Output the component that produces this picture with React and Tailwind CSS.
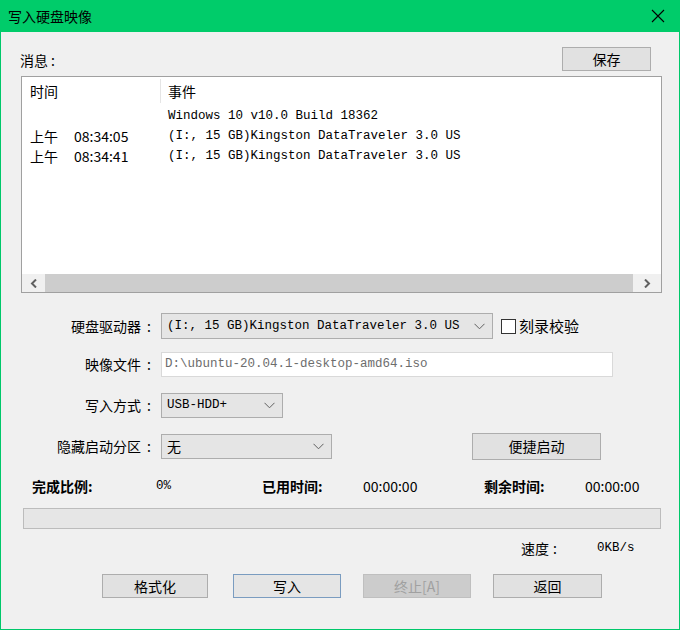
import React from "react";

const cjk = "font-['Microsoft_YaHei','Noto_Sans_CJK_SC',sans-serif]";
const mono = "font-['Liberation_Mono','Noto_Sans_CJK_SC',monospace]";

const Chevron = () => (
  <svg width="11" height="7" viewBox="0 0 11 7" fill="none">
    <path d="M0.5 0.8 L5.5 5.8 L10.5 0.8" stroke="#606060" strokeWidth="1" />
  </svg>
);

const Combo = ({ width, children, textClass }) => (
  <div
    className={`flex h-[24px] items-center justify-between border border-[#adadad] bg-[#e5e5e5] pl-[5px] pr-[7px] ${width}`}
  >
    <span className={textClass}>{children}</span>
    <Chevron />
  </div>
);

const Button = ({ children, className = "" }) => (
  <div
    className={`flex h-[24px] items-center justify-center border text-[14px] ${className}`}
  >
    {children}
  </div>
);

// label with the spaced colon seen in the dialog
const Label = ({ children }) => (
  <span className="flex w-[132px] justify-end pr-[2px]">
    {children}
    <span className="ml-[6px]">:</span>
  </span>
);

const rows = [
  { time: "", event: "Windows 10 v10.0 Build 18362" },
  { time: "08:34:05", event: "(I:, 15 GB)Kingston DataTraveler 3.0 US" },
  { time: "08:34:41", event: "(I:, 15 GB)Kingston DataTraveler 3.0 US" },
];

export default function App() {
  return (
    <div
      className={`flex h-[630px] w-[680px] flex-col border-x border-b border-[#00c86a] bg-[#f0f0f0] text-black ${cjk}`}
    >
      {/* Title bar */}
      <div className="-mx-px flex h-[32px] items-center justify-between bg-[#00cc6a] pl-[8px] pr-[15px]">
        <span className="text-[14px]">写入硬盘映像</span>
        <svg width="14" height="14" viewBox="0 0 14 14">
          <path d="M1 1 L13 13 M13 1 L1 13" stroke="#000" strokeWidth="1.1" />
        </svg>
      </div>

      <div className="flex flex-col pl-[20px] pr-[17px]">
        {/* Messages header */}
        <div className="mt-[15px] flex h-[24px] items-center justify-between">
          <span className="-ml-px pt-[3px] text-[14px]">
            消息<span className="ml-[3px]">:</span>
          </span>
          <Button className="mr-[11px] w-[89px] border-[#adadad] bg-[#e1e1e1]">保存</Button>
        </div>

        {/* Log list */}
        <div className="mt-[5px] flex h-[217px] flex-col border border-[#a0a0a0] bg-white">
          <div className="flex h-[28px] items-center text-[14px]">
            <span className="w-[138px] pl-[8px]">时间</span>
            <span className="h-[24px] w-px bg-[#e5e5e5]" />
            <span className="pl-[7px]">事件</span>
          </div>
          <div className="flex flex-col pt-[1px]">
            {rows.map((r, i) => (
              <div key={i} className="flex h-[20px] items-center">
                <span className="flex w-[146px] pl-[8px] text-[14px]">
                  {r.time && (
                    <>
                      <span>上午</span>
                      <span className="ml-[16px]">{r.time}</span>
                    </>
                  )}
                </span>
                <span className={`${mono} text-[12.5px]`}>{r.event}</span>
              </div>
            ))}
          </div>
          <div className="flex-1" />
          <div className="flex h-[18px] bg-[#f0f0f0]">
            <div className="flex w-[23px] items-center justify-center">
              <svg width="8" height="9" viewBox="0 0 8 9">
                <path d="M6 0.5 L2 4.5 L6 8.5" stroke="#606060" strokeWidth="2" fill="none" />
              </svg>
            </div>
            <div className="flex-1 bg-[#cdcdcd]" />
            <div className="flex w-[28px] items-center justify-center">
              <svg width="8" height="9" viewBox="0 0 8 9">
                <path d="M2 0.5 L6 4.5 L2 8.5" stroke="#606060" strokeWidth="2" fill="none" />
              </svg>
            </div>
          </div>
        </div>

        {/* Form rows */}
        <div className="mt-[20px] flex h-[26px] items-center text-[14px]">
          <Label>硬盘驱动器</Label>
          <div className="ml-[8px]">
            <Combo width="w-[332px] h-[26px]" textClass={`${mono} text-[12.5px]`}>
              (I:, 15 GB)Kingston DataTraveler 3.0 US
            </Combo>
          </div>
          <div className="ml-[8px] h-[15px] w-[15px] border border-[#333] bg-white" />
          <span className="ml-[3px] text-[15px]">刻录校验</span>
        </div>

        <div className="mt-[13px] flex h-[25px] items-center text-[14px]">
          <Label>映像文件</Label>
          <div
            className={`ml-[8px] flex h-[25px] w-[452px] items-center border border-[#d9d9d9] bg-white pl-[3px] text-[12.5px] text-[#6d6d6d] ${mono}`}
          >
            D:\ubuntu-20.04.1-desktop-amd64.iso
          </div>
        </div>

        <div className="mt-[16px] flex h-[25px] items-center text-[14px]">
          <Label>写入方式</Label>
          <div className="ml-[8px]">
            <Combo width="w-[122px] h-[25px]" textClass={`${mono} text-[12.5px]`}>
              USB-HDD+
            </Combo>
          </div>
        </div>

        <div className="mt-[15px] flex h-[27px] items-center text-[14px]">
          <Label>隐藏启动分区</Label>
          <div className="ml-[8px]">
            <Combo width="w-[171px] h-[25px]" textClass="text-[14px]">
              无
            </Combo>
          </div>
          <Button className="ml-[140px] h-[27px] w-[129px] border-[#adadad] bg-[#e1e1e1]">
            便捷启动
          </Button>
        </div>

        {/* Progress info */}
        <div className="mt-[16px] flex h-[20px] items-center text-[14px]">
          <span className="w-[135px] pl-[11px] font-bold">完成比例:</span>
          <span className={`w-[106px] ${mono} text-[12.5px]`}>0%</span>
          <span className="w-[101px] font-bold">已用时间:</span>
          <span className="w-[121px]">00:00:00</span>
          <span className="w-[101px] font-bold">剩余时间:</span>
          <span>00:00:00</span>
        </div>

        <div className="ml-[2px] mr-[1px] mt-[12px] h-[21px] border border-[#bcbcbc] bg-[#e6e6e6]" />

        <div className="mt-[8px] flex h-[22px] items-center text-[14px]">
          <span className="ml-[500px] w-[76px]">
            速度<span className="ml-[4px]">:</span>
          </span>
          <span className={`${mono} text-[12.5px]`}>0KB/s</span>
        </div>

        {/* Bottom buttons */}
        <div className="mt-[15px] flex h-[24px] items-center">
          <Button className="ml-[81px] w-[106px] border-[#adadad] bg-[#e1e1e1]">格式化</Button>
          <Button className="ml-[25px] w-[108px] border-[#7a9cc0] bg-[#e5e5e5]">写入</Button>
          <Button className="ml-[22px] w-[108px] border-[#bfbfbf] bg-[#cccccc] text-[#a0a0a0]">
            终止[A]
          </Button>
          <Button className="ml-[22px] w-[109px] border-[#adadad] bg-[#e1e1e1]">返回</Button>
        </div>
      </div>
    </div>
  );
}
